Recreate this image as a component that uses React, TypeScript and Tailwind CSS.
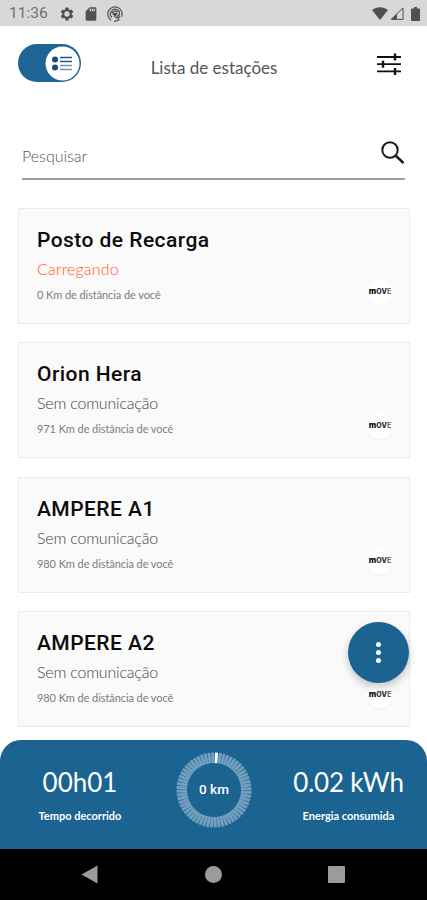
import { useState } from "react";

type Station = {
  name: string;
  status: string;
  distance: string;
  charging?: boolean;
};

const stations: Station[] = [
  { name: "Posto de Recarga", status: "Carregando", distance: "0 Km de distância de você", charging: true },
  { name: "Orion Hera", status: "Sem comunicação", distance: "971 Km de distância de você" },
  { name: "AMPERE A1", status: "Sem comunicação", distance: "980 Km de distância de você" },
  { name: "AMPERE A2", status: "Sem comunicação", distance: "980 Km de distância de você" },
];

const ticks = Array.from({ length: 60 }, (_, index) => index * 6 + 4);

function StatusBar() {
  return (
    <div className="flex h-[26px] shrink-0 items-center bg-[#d8d8d8] pt-px pr-[7px] pl-[9px] text-[#505050]">
      <span className="w-[50px] pt-px font-[Roboto] text-[15.5px] leading-none text-[#707070]">11:36</span>
      <svg className="h-4 w-4" viewBox="0 0 24 24" fill="currentColor">
        <path d="M19.14 12.94a7.5 7.5 0 0 0 0-1.88l2.03-1.58a.5.5 0 0 0 .12-.61l-1.92-3.32a.5.5 0 0 0-.59-.22l-2.39.96a7 7 0 0 0-1.62-.94l-.36-2.54a.5.5 0 0 0-.48-.41h-3.84a.5.5 0 0 0-.47.41l-.36 2.54a7 7 0 0 0-1.62.94l-2.39-.96a.5.5 0 0 0-.59.22L2.74 8.87a.5.5 0 0 0 .12.61l2.03 1.58a7.5 7.5 0 0 0 0 1.88l-2.03 1.58a.5.5 0 0 0-.12.61l1.92 3.32c.12.22.37.29.59.22l2.39-.96c.5.38 1.03.7 1.62.94l.36 2.54c.05.24.24.41.48.41h3.84c.24 0 .44-.17.47-.41l.36-2.54a7 7 0 0 0 1.62-.94l2.39.96c.22.08.47 0 .59-.22l1.92-3.32a.5.5 0 0 0-.12-.61zM12 16a4 4 0 1 1 0-8 4 4 0 0 1 0 8z" />
      </svg>
      <svg className="ml-2 h-4 w-4" viewBox="0 0 24 24" fill="currentColor">
        <path d="M18 2h-8L4.02 8 4 20c0 1.1.9 2 2 2h12c1.1 0 2-.9 2-2V4c0-1.1-.9-2-2-2zm-6 6h-2V4h2v4zm3 0h-2V4h2v4zm3 0h-2V4h2v4z" />
      </svg>
      <svg className="ml-2 h-4 w-4" viewBox="0 0 16 16" fill="none" stroke="currentColor" strokeWidth="1.2">
        <path d="M4.2 14.2A7.2 7.2 0 1 1 14.6 10.7M12.5 13.5A7.2 7.2 0 0 1 7 15.1" />
        <path d="M5 11.5A4.6 4.6 0 1 1 12.3 9.5M5 8A3 3 0 0 1 10.5 6.4" />
        <path d="M7 10.8 10.5 7.2M8.5 12.2 12 9M10.3 13 13 10.6" strokeWidth="1.4" />
        <circle cx="7.5" cy="8" r="1" fill="currentColor" />
      </svg>
      <div className="ml-auto flex items-center">
        <svg className="h-[13px] w-4" viewBox="0 0 16 13" fill="currentColor">
          <path d="M8 13 0 3.1C2.2 1.2 5 .2 8 .2s5.8 1 8 2.9z" />
        </svg>
        <svg className="ml-0.5 h-[13px] w-[14px]" viewBox="0 0 14 13" fill="none" stroke="currentColor">
          <path d="M1.2 12.4H13V.9z" />
          <path d="M1 12.5 7 6.5v6z" fill="currentColor" stroke="none" />
        </svg>
        <svg className="ml-[7px] h-[14px] w-[9px]" viewBox="0 0 9 14" fill="currentColor">
          <path d="M3 0h3v1.5h2a1 1 0 0 1 1 1V13a1 1 0 0 1-1 1H1a1 1 0 0 1-1-1V2.5a1 1 0 0 1 1-1h2z" />
        </svg>
      </div>
    </div>
  );
}

function Header() {
  const [listView, setListView] = useState(true);

  return (
    <header className="flex h-[76px] shrink-0 items-start pr-[26px] pl-[18px]">
      <button
        className="mt-[18px] flex h-[38px] w-[63px] items-center justify-end rounded-full bg-[#1d6594] pr-px"
        onClick={() => setListView(!listView)}
        aria-pressed={listView}
        aria-label="Lista"
      >
        <svg className="h-[35px] w-[35px]" viewBox="0 0 35 35">
          <circle cx="17.5" cy="17.5" r="17" fill="#fff" />
          <circle cx="10" cy="13.5" r="3" fill="#174a87" />
          <circle cx="10" cy="21.5" r="3" fill="#174a87" />
          <path d="M15 11.5h12M15 15.5h12" stroke="#23558f" strokeWidth="1.7" />
          <path d="M15 19.5h12M15 23.5h12" stroke="#7290b8" strokeWidth="1.7" />
        </svg>
      </button>
      <h1 className="mt-[30px] flex-1 pr-[30px] text-center text-[17px] leading-6 text-[#555555]">Lista de estações</h1>
      <svg className="mt-[26px] h-6 w-6" viewBox="0 0 24 24" fill="none" stroke="#111" strokeWidth="1.8">
        <path d="M0 5h24M0 12.2h24M0 19.4h24" />
        <path d="M18 1.5v7M6 8.7v7M18 15.9v7" strokeWidth="2.4" />
      </svg>
    </header>
  );
}

function StationCard({ station }: { station: Station }) {
  return (
    <article className="flex h-[116px] shrink-0 justify-between border border-[#ebebeb] bg-[#fafafa] pr-4 pl-[18px]">
      <div className="whitespace-nowrap">
        <h2 className="mt-[18px] font-[Roboto] text-[21px] leading-[26px] font-medium tracking-[0.45px] text-[#0c0c0c]">
          {station.name}
        </h2>
        <p
          className={`mt-[6px] text-[16px] leading-5 font-light ${
            station.charging ? "tracking-[0.15px] text-[#ff5a20]" : "tracking-[-0.2px] text-[#444444]"
          }`}
        >
          {station.status}
        </p>
        <p className="mt-2 text-[11px] leading-4 tracking-[-0.08px] text-[#7c7c7c]">{station.distance}</p>
      </div>
      <div className="mt-[70px] flex h-[26px] w-[26px] justify-center rounded-full bg-white pt-[8px] shadow-[0_1px_2px_rgba(0,0,0,0.04)]">
        <span className="font-[Inter] text-[7px] leading-[9px] font-extrabold tracking-[0.1px] text-[#252b33]">
          <span className="text-[8px] text-black">m</span>OV<span className="text-[#60717d]">E</span>
        </span>
      </div>
    </article>
  );
}

function ChargeSummary() {
  return (
    <section className="z-10 flex h-[109px] shrink-0 rounded-t-[21px] bg-[#1b6391] text-white">
      <div className="w-[160px] pt-[26px] text-center">
        <p className="text-[26px] leading-8">00h01</p>
        <p className="mt-[10px] text-[11px] leading-4 font-bold">Tempo decorrido</p>
      </div>
      <div className="relative mt-3 ml-4 flex h-[76px] w-[76px] items-center justify-center">
        <svg className="absolute inset-0" viewBox="0 0 76 76" strokeWidth="3">
          {ticks.map((angle) => (
            <path
              key={angle}
              d="M38 .5V11"
              transform={`rotate(${angle} 38 38)`}
              stroke={angle === 4 ? "#f2f8fb" : "#729fbd"}
            />
          ))}
        </svg>
        <span className="relative font-[Roboto] text-[13.5px] leading-none font-medium">0 km</span>
      </div>
      <div className="ml-auto w-[157px] pt-[26px] text-center">
        <p className="text-[26px] leading-8 tracking-[-0.2px]">0.02 kWh</p>
        <p className="mt-[10px] text-[11px] leading-4 font-bold">Energia consumida</p>
      </div>
    </section>
  );
}

export default function App() {
  return (
    <div className="relative flex h-[900px] w-[427px] flex-col overflow-hidden bg-white font-[Lato,sans-serif]">
      <StatusBar />
      <Header />
      <div className="mx-[22px] mt-[30px] flex h-12 shrink-0 items-start justify-between border-b-2 border-[#9c9e9d]">
        <input
          className="mt-[12px] h-6 w-[300px] bg-transparent text-[16px] font-light outline-none placeholder:text-[#555555]"
          placeholder="Pesquisar"
          aria-label="Pesquisar"
        />
        <svg className="mt-[9px] h-6 w-6" viewBox="0 0 24 24" fill="none" stroke="#1b1b1b" strokeWidth="2">
          <circle cx="9" cy="9" r="7.7" />
          <path d="m14.5 14.5 8 7.5" strokeWidth="2.4" />
        </svg>
      </div>
      <main className="mr-[17px] ml-[18px] flex h-[560px] shrink-0 flex-col gap-[18.4px] pt-7">
        {stations.map((station) => (
          <StationCard key={station.name} station={station} />
        ))}
      </main>
      <button
        className="absolute top-[622px] left-[348px] flex h-[61px] w-[61px] flex-col items-center justify-center gap-[2.5px] rounded-full bg-[#1b6391] shadow-[0_4px_8px_rgba(0,0,0,0.22)]"
        aria-label="Mais opções"
      >
        <span className="h-[5.5px] w-[5.5px] rounded-full bg-white" />
        <span className="h-[5.5px] w-[5.5px] rounded-full bg-white" />
        <span className="h-[5.5px] w-[5.5px] rounded-full bg-white" />
      </button>
      <ChargeSummary />
      <nav className="flex h-[51px] shrink-0 items-center justify-between bg-black pr-[82px] pl-[81px]">
        <svg className="h-[19px] w-[17px]" viewBox="0 0 17 19" fill="#9b9b9b">
          <path d="M16.5.5v18L.5 9.5z" />
        </svg>
        <span className="ml-px h-[17px] w-[17px] rounded-full bg-[#9b9b9b]" />
        <span className="h-[17px] w-[17px] rounded-[1px] bg-[#9b9b9b]" />
      </nav>
    </div>
  );
}
